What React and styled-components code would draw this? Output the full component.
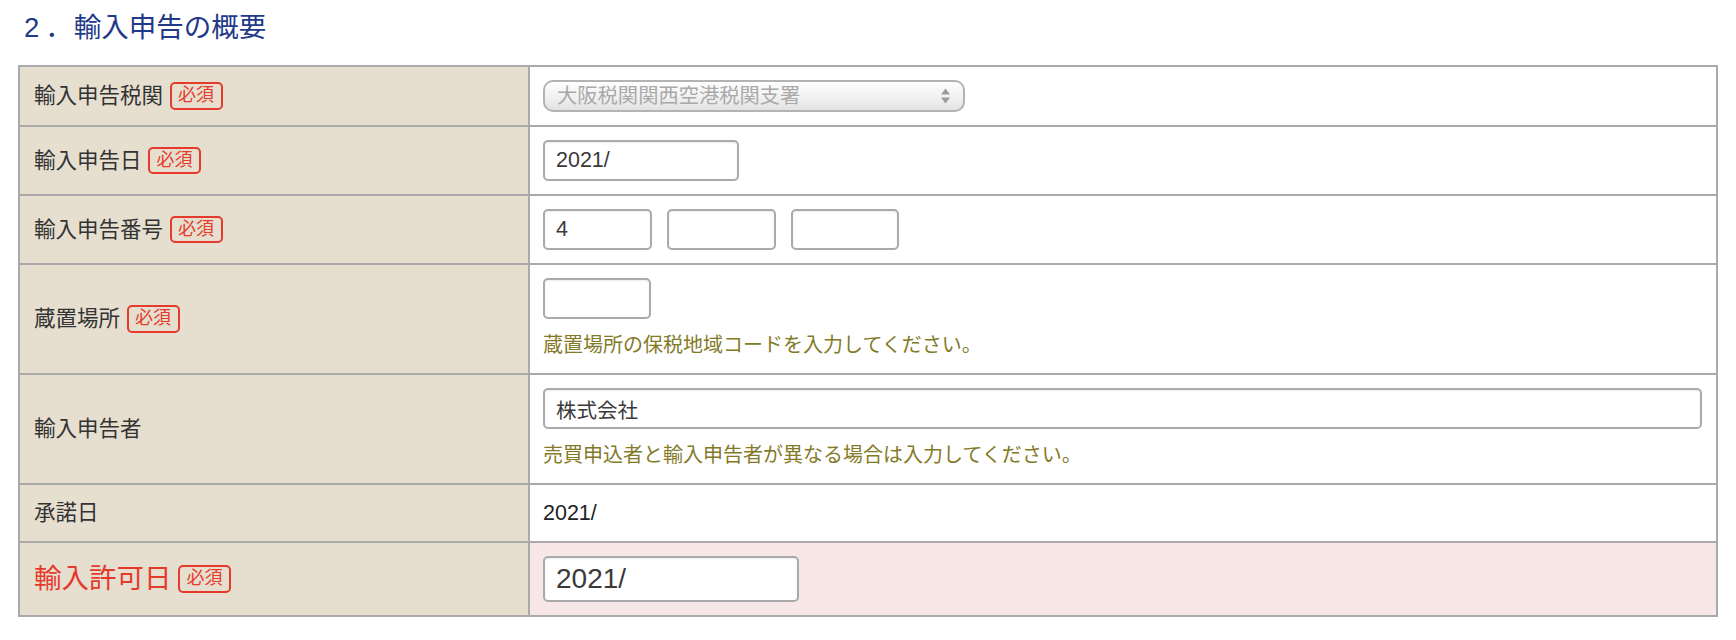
import React from "react";
import styled, { createGlobalStyle } from "styled-components";

const Global = createGlobalStyle`
  html, body { margin: 0; padding: 0; background: #fff; }
  body {
    font-family: "Liberation Sans", "Noto Sans CJK JP", sans-serif;
    color: #333;
  }
  * { box-sizing: border-box; }
`;

const Page = styled.div`
  padding: 10px 18px 0 18px;
`;

const Heading = styled.h2`
  margin: 0 0 19px 0;
  padding-left: 5px;
  font-size: 27.5px;
  line-height: 36px;
  font-weight: normal;
  color: #1f3a88;
`;

const SectionNumber = styled.span`
  display: inline-block;
  padding-left: 1px;
  margin-right: -5px;
  letter-spacing: 6px;
`;

const Table = styled.div`
  border: 2px solid #aaaaaa;
`;

const Row = styled.div`
  display: grid;
  grid-template-columns: 510px 1fr;
  & + & {
    border-top: 2px solid #aaaaaa;
  }
`;

const LabelCell = styled.div`
  display: flex;
  align-items: center;
  padding-left: 14px;
  background: #e6dfd0;
  border-right: 2px solid #aaaaaa;
  font-size: ${(p) => (p.$big ? "27.5px" : "21.5px")};
  color: ${(p) => (p.$alert ? "#e5392b" : "#333")};
  line-height: 30px;
`;

const Badge = styled.span`
  display: inline-flex;
  align-items: center;
  margin-left: 6.5px;
  padding: 0 6.5px;
  border: 2px solid #e63b2c;
  border-radius: 5px;
  color: #e63b2c;
  font-size: 18px;
  line-height: 23.5px;
  background: transparent;
`;

const ValueCell = styled.div`
  display: flex;
  flex-direction: column;
  justify-content: center;
  padding: 13px 14px 13px 13px;
  background: ${(p) => (p.$alert ? "#f8e7e7" : "#fff")};
`;

const InputGroup = styled.div`
  display: flex;
  gap: 15px;
`;

const TextInput = styled.input`
  display: block;
  width: ${(p) => p.$w || "108px"};
  height: ${(p) => (p.$large ? "46px" : "41px")};
  padding: 0 11px;
  border: 2px solid #aaaaaa;
  border-radius: 5px;
  background: #fff;
  box-shadow: inset 0 1px 2px rgba(0, 0, 0, 0.08);
  font-family: "Liberation Sans", "Noto Sans CJK JP", sans-serif;
  font-size: ${(p) => (p.$large ? "28px" : p.$small ? "20.5px" : "21.5px")};
  color: #3a3a3a;
  outline: none;
`;

const Select = styled.div`
  position: relative;
  width: 422px;
  height: 32px;
  padding: 0 30px 0 12px;
  border: 2px solid #b3b3b3;
  border-radius: 10px;
  background: linear-gradient(#fefefe 0%, #f1f1f1 55%, #e2e2e2 100%);
  box-shadow: inset 0 1px 1px rgba(255, 255, 255, 0.9);
  font-size: 20.3px;
  line-height: 28px;
  color: #a9a9a9;
  white-space: nowrap;
`;

const Arrows = styled.svg`
  position: absolute;
  right: 12px;
  top: 50%;
  transform: translateY(-50%);
`;

const Hint = styled.div`
  margin-top: 11px;
  font-size: 20px;
  line-height: 30px;
  color: #837a28;
`;

const PlainText = styled.div`
  font-size: 21.5px;
  line-height: 30px;
  color: #222;
`;

export default function App() {
  return (
    <>
      <Global />
      <Page>
        <Heading>
          <SectionNumber>2．</SectionNumber>輸入申告の概要
        </Heading>
        <Table>
          <Row>
            <LabelCell>
              輸入申告税関<Badge>必須</Badge>
            </LabelCell>
            <ValueCell>
              <Select>
                大阪税関関西空港税関支署
                <Arrows width="11" height="17" viewBox="0 0 11 17">
                  <path d="M5.5 1 L10 7 L1 7 Z" fill="#9c9c9c" />
                  <path d="M5.5 16 L10 10 L1 10 Z" fill="#9c9c9c" />
                </Arrows>
              </Select>
            </ValueCell>
          </Row>
          <Row>
            <LabelCell>
              輸入申告日<Badge>必須</Badge>
            </LabelCell>
            <ValueCell>
              <TextInput $w="196px" defaultValue="2021/" readOnly />
            </ValueCell>
          </Row>
          <Row>
            <LabelCell>
              輸入申告番号<Badge>必須</Badge>
            </LabelCell>
            <ValueCell>
              <InputGroup>
                <TextInput $w="109px" defaultValue="4" readOnly />
                <TextInput $w="109px" defaultValue="" readOnly />
                <TextInput $w="108px" defaultValue="" readOnly />
              </InputGroup>
            </ValueCell>
          </Row>
          <Row>
            <LabelCell>
              蔵置場所<Badge>必須</Badge>
            </LabelCell>
            <ValueCell>
              <TextInput $w="108px" defaultValue="" readOnly />
              <Hint>蔵置場所の保税地域コードを入力してください。</Hint>
            </ValueCell>
          </Row>
          <Row>
            <LabelCell>輸入申告者</LabelCell>
            <ValueCell>
              <TextInput $w="100%" $small defaultValue="株式会社" readOnly />
              <Hint>売買申込者と輸入申告者が異なる場合は入力してください。</Hint>
            </ValueCell>
          </Row>
          <Row>
            <LabelCell>承諾日</LabelCell>
            <ValueCell>
              <PlainText>2021/</PlainText>
            </ValueCell>
          </Row>
          <Row>
            <LabelCell $alert $big>
              輸入許可日<Badge>必須</Badge>
            </LabelCell>
            <ValueCell $alert>
              <TextInput $w="256px" $large defaultValue="2021/" readOnly />
            </ValueCell>
          </Row>
        </Table>
      </Page>
    </>
  );
}
